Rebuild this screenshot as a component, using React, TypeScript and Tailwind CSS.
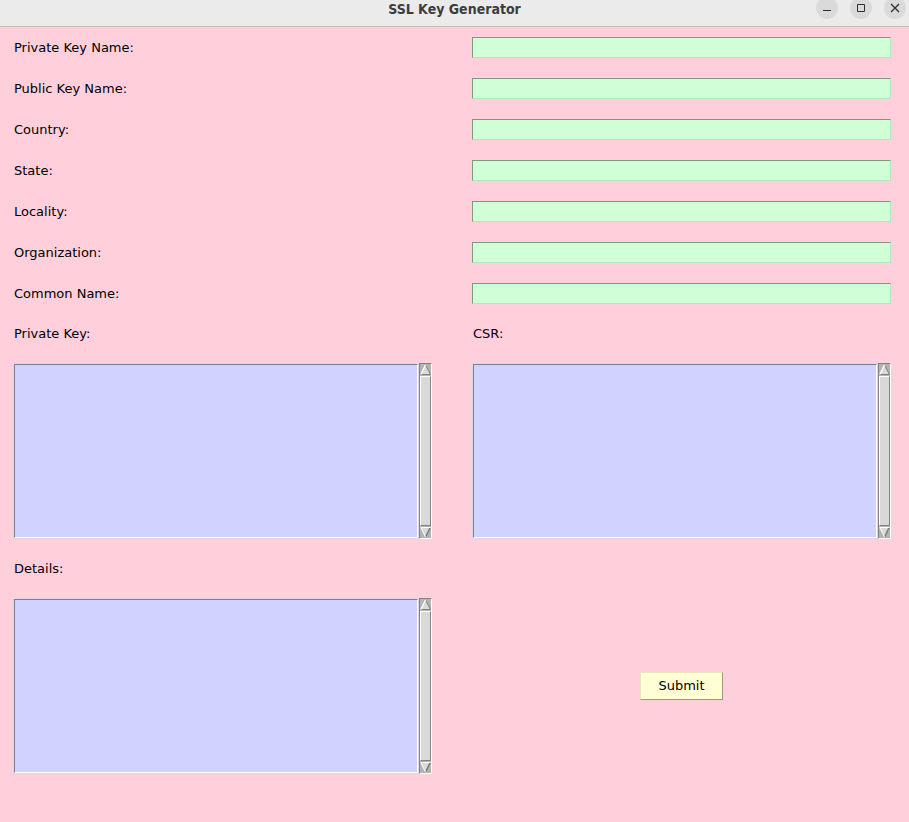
import { useState } from "react";

const fields = [
  ["private-key-name", "Private Key Name:"],
  ["public-key-name", "Public Key Name:"],
  ["country", "Country:"],
  ["state", "State:"],
  ["locality", "Locality:"],
  ["organization", "Organization:"],
  ["common-name", "Common Name:"],
];

function TitleButton({ label, children }: { label: string; children: React.ReactNode }) {
  return (
    <button type="button" aria-label={label} className="flex h-[22px] w-[22px] items-center justify-center rounded-full bg-[#dadada]">
      <svg width="12" height="12" viewBox="0 0 12 12" fill="none" stroke="#2e2e2e">
        {children}
      </svg>
    </button>
  );
}

function Scrollbar() {
  return (
    <div className="flex w-[13px] shrink-0 flex-col border border-t-[#828282] border-l-[#828282] border-r-white border-b-white bg-[#b3b3b3]" aria-hidden="true">
      <svg className="shrink-0" width="11" height="12" viewBox="0 0 11 12">
        <path d="M5.5 1 L0.5 11 H10.5 Z" fill="#d9d9d9" />
        <path d="M5.5 1 L10.5 10.5 H0.5" stroke="#828282" fill="none" />
        <path d="M5.5 1 L0.8 10.5" stroke="#fff" strokeWidth="1.4" fill="none" />
      </svg>
      <div className="flex-1 border border-t-white border-l-white border-r-[#828282] border-b-[#828282] bg-[#d9d9d9]" />
      <svg className="shrink-0" width="11" height="12" viewBox="0 0 11 12">
        <path d="M0.5 1.5 H10.5 L5.5 11 Z" fill="#d9d9d9" />
        <path d="M10.2 1.5 L5.5 11" stroke="#757575" strokeWidth="1.4" fill="none" />
        <path d="M10.5 1.5 H0.8 L5.5 11" stroke="#fff" fill="none" />
      </svg>
    </div>
  );
}

function OutputBox({ id, label }: { id: string; label: string }) {
  const [value, setValue] = useState("");
  return (
    <div className="flex flex-col">
      <label htmlFor={id} className="flex h-[59px] items-center px-px">{label}</label>
      <div className="flex h-44">
        <div className="flex min-w-0 flex-1 border border-[#d9d9d9]">
          <textarea
            id={id}
            value={value}
            onChange={(e) => setValue(e.target.value)}
            className="min-w-0 flex-1 resize-none border border-t-[#7d7f99] border-l-[#7d7f99] border-r-white border-b-white bg-[#d0d3ff] outline-none"
          />
        </div>
        <Scrollbar />
      </div>
    </div>
  );
}

export default function App() {
  return (
    <div className="flex min-h-screen flex-col bg-[#ffd0db] font-['DejaVu_Sans',sans-serif] text-[13px] leading-5 text-black">
      <header className="grid h-[27px] grid-cols-[1fr_auto_1fr] items-start border-b border-[#bfbfbf] bg-[#ebebeb]">
        <h1 className="col-start-2 font-['DejaVu_Sans_Condensed','DejaVu_Sans',sans-serif] text-[14px] leading-[18px] font-bold text-[#3d3d3d]">SSL Key Generator</h1>
        <div className="-mt-[3px] flex justify-end gap-3 pr-[3px]">
          <TitleButton label="Minimize"><path d="M2 8.5 H10" /></TitleButton>
          <TitleButton label="Maximize"><path d="M2.5 2.5 H9.5 V9.5 H2.5 Z" /></TitleButton>
          <TitleButton label="Close"><path d="M2 2 L10 10 M10 2 L2 10" strokeWidth="1.3" /></TitleButton>
        </div>
      </header>
      <form className="pt-[10px] pr-[18px] pl-[13px]" onSubmit={(e) => e.preventDefault()}>
        <div className="flex flex-col gap-5">
          {fields.map(([id, label]) => (
            <div key={id} className="grid h-[21px] grid-cols-2 items-center gap-10">
              <label htmlFor={id} className="px-px">{label}</label>
              <input
                id={id}
                type="text"
                className="h-[21px] w-full border border-t-[#7d9981] border-l-[#7d9981] border-r-[#b5e6bb] border-b-[#b5e6bb] bg-[#d0ffd7] px-1 outline-none"
              />
            </div>
          ))}
        </div>
        <div className="grid grid-cols-2 gap-x-10">
          <OutputBox id="private-key" label="Private Key:" />
          <OutputBox id="csr" label="CSR:" />
          <OutputBox id="details" label="Details:" />
          <div className="flex items-center justify-center pt-[59px]">
            <button type="submit" className="h-7 w-[83px] border border-t-[#e6e6b8] border-l-[#e6e6b8] border-r-[#99997d] border-b-[#99997d] bg-[#ffffd3]">Submit</button>
          </div>
        </div>
      </form>
    </div>
  );
}
